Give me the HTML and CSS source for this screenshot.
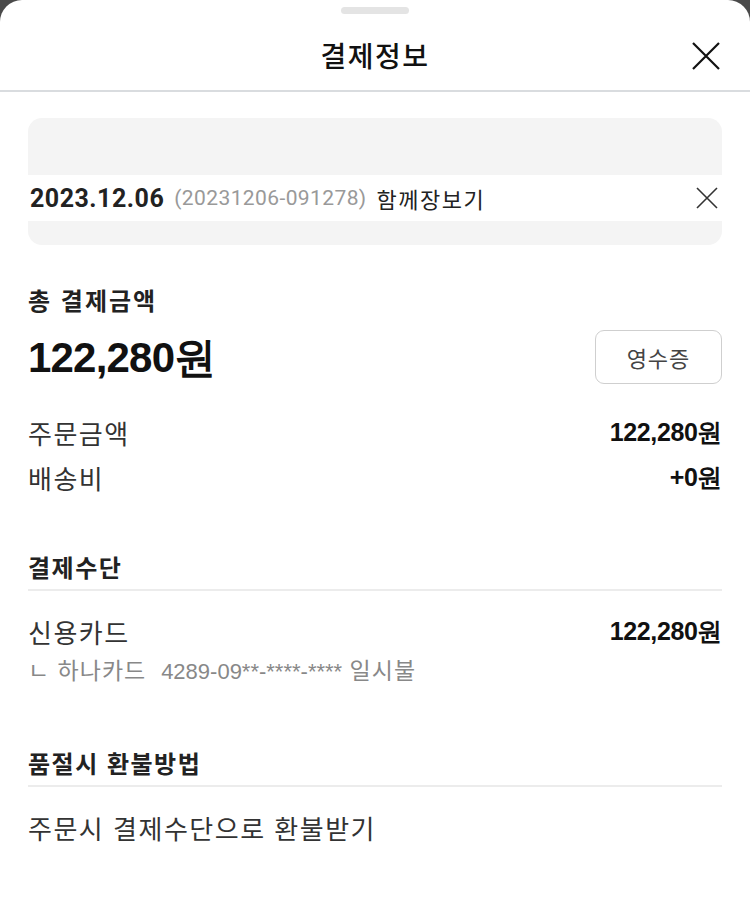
FILE: index.html
```html
<!DOCTYPE html>
<html lang="ko">

<head>
    <meta charset="UTF-8">
    <meta name="viewport" content="width=device-width, initial-scale=1.0">
    <title>결제정보</title>
    <link rel="stylesheet" href="styles.css">
</head>

<body>
    <div class="sheet">
        <div class="handle"></div>
        <div class="header">
            <h1>결제정보</h1>
            <button class="close" aria-label="닫기">
                <svg width="28" height="28" viewBox="0 0 28 28">
                    <path d="M1 1 L27 27 M27 1 L1 27" stroke="#111" stroke-width="2.2" fill="none" />
                </svg>
            </button>
        </div>

        <div class="content">
            <div class="order-card">
                <div class="order-row">
                    <span class="order-date">2023.12.06</span>
                    <span class="order-no">(20231206-091278)</span>
                    <span class="order-type">함께장보기</span>
                    <svg class="order-close" width="22" height="22" viewBox="0 0 22 22">
                        <path d="M1 1 L21 21 M21 1 L1 21" stroke="#333" stroke-width="1.6" fill="none" />
                    </svg>
                </div>
            </div>

            <div class="section">
                <h2 class="label">총 결제금액</h2>
                <div class="total">
                    <span class="total-price">122,280원</span>
                    <button class="receipt">영수증</button>
                </div>
                <div class="row">
                    <span>주문금액</span>
                    <strong>122,280원</strong>
                </div>
                <div class="row">
                    <span>배송비</span>
                    <strong>+0원</strong>
                </div>
            </div>

            <div class="section">
                <h2 class="title">결제수단</h2>
                <div class="row">
                    <span>신용카드</span>
                    <strong>122,280원</strong>
                </div>
                <div class="sub">ㄴ 하나카드&nbsp; <span class="card-no">4289-09**-****-****</span> 일시불</div>
            </div>

            <div class="section">
                <h2 class="title">품절시 환불방법</h2>
                <div class="row">
                    <span>주문시 결제수단으로 환불받기</span>
                </div>
            </div>
        </div>
    </div>
</body>

</html>
```

FILE: styles.css
```css
body {
    margin: 0;
    background: #4a4a4a;
    font-family: "Noto Sans CJK KR", "Liberation Sans", sans-serif;
    color: #222;
}

.sheet {
    background: #fff;
    border-radius: 22px 22px 0 0;
    min-height: 921px;
    width: 750px;
}

.handle {
    width: 68px;
    height: 7px;
    margin: 0 auto;
    position: relative;
    top: 7px;
    background: #e4e4e4;
    border-radius: 4px;
}

.header {
    height: 83px;
    display: flex;
    align-items: center;
    justify-content: center;
    border-bottom: 2px solid #d9dcdf;
    position: relative;
}

.header h1 {
    margin: 0;
    font-size: 28px;
    font-weight: 500;
    letter-spacing: 1.5px;
    color: #111;
    padding-top: 12px;
}

.close {
    position: absolute;
    right: 30px;
    top: 35px;
    border: none;
    background: none;
    padding: 0;
    width: 28px;
    height: 28px;
}

.content {
    padding: 26px 28px 0;
}

.order-card {
    background: #f4f4f4;
    border-radius: 14px;
    padding: 57px 0 24px;
}

.order-row {
    background: #fff;
    height: 46px;
    display: flex;
    align-items: center;
    padding: 0 4px 0 2px;
}

.order-date {
    font-family: Roboto, sans-serif;
    font-weight: 700;
    font-size: 25px;
    color: #222;
    letter-spacing: 0.5px;
}

.order-no {
    font-family: Roboto, sans-serif;
    font-size: 21px;
    color: #999;
    margin-left: 10px;
    letter-spacing: 0.4px;
}

.order-type {
    font-size: 22px;
    letter-spacing: 1.5px;
    color: #222;
    margin-left: 10px;
}

.order-close {
    margin-left: auto;
}

.section {
    margin-top: 40px;
}

.section + .section {
    margin-top: 52px;
}

.label {
    margin: 0;
    font-size: 24px;
    line-height: 30px;
    font-weight: 700;
    letter-spacing: 2px;
    color: #222;
}

.total {
    display: flex;
    justify-content: space-between;
    align-items: center;
    margin-top: 12px;
    margin-bottom: 24px;
}

.total-price {
    font-family: "Liberation Sans", sans-serif;
    font-size: 42px;
    font-weight: 700;
    color: #111;
    letter-spacing: -0.8px;
    padding-top: 3px;
}

.receipt {
    width: 127px;
    height: 54px;
    border: 1px solid #cfcfcf;
    border-radius: 9px;
    background: #fff;
    font-family: "Noto Sans CJK KR", sans-serif;
    font-size: 22px;
    letter-spacing: 1px;
    color: #444;
}

.row {
    display: flex;
    justify-content: space-between;
    align-items: center;
    height: 45px;
    font-size: 26px;
    letter-spacing: 1.5px;
    color: #333;
}

.row strong {
    font-family: "Liberation Sans", sans-serif;
    font-size: 25px;
    color: #111;
    letter-spacing: -0.4px;
}

.title {
    margin: 0 0 18px;
    padding-bottom: 7px;
    font-size: 24px;
    line-height: 30px;
    font-weight: 700;
    letter-spacing: 1.5px;
    color: #222;
    border-bottom: 2px solid #ececec;
}

.sub {
    font-size: 23px;
    line-height: 30px;
    letter-spacing: 1px;
    color: #888;
    padding-bottom: 9px;
}

.card-no {
    font-family: "Liberation Sans", sans-serif;
    font-size: 22px;
    letter-spacing: 0;
}
```
